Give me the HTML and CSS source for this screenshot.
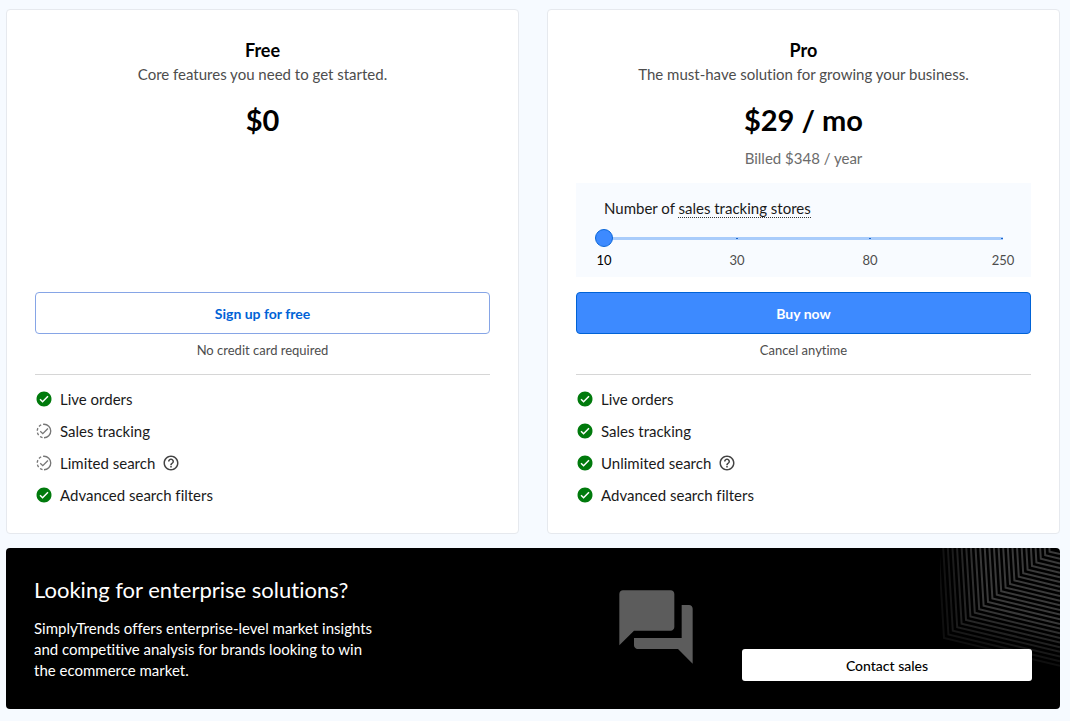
FILE: index.html
```html
<!DOCTYPE html>
<html lang="en">
  <head>
    <meta charset="UTF-8" />
    <meta name="viewport" content="width=device-width, initial-scale=1.0" />
    <title>SimplyTrends Pricing</title>
    <link rel="stylesheet" href="styles.css">
  </head>
  <body>
    <svg class="sprite" aria-hidden="true">
      <symbol id="check" viewBox="0 0 24 24">
        <path d="M12 2C6.48 2 2 6.48 2 12s4.48 10 10 10 10-4.48 10-10S17.52 2 12 2z" fill="#007a0c" />
        <path d="M6.7 12.3l3.4 3.4 7.2-7.3" fill="none" stroke="#fff" stroke-width="2" />
      </symbol>
      <symbol id="partial" viewBox="0 0 24 24">
        <path d="M12 3a9 9 0 0 1 0 18" fill="none" stroke="#777" stroke-width="1.8" />
        <path d="M12 21a9 9 0 0 1 0-18" fill="none" stroke="#777" stroke-width="1.8" stroke-dasharray="3.6 2.6" stroke-dashoffset="-2" />
        <path d="M7 12.3l3.4 3.2 6.8-6.8" fill="none" stroke="#777" stroke-width="1.8" />
      </symbol>
      <symbol id="help" viewBox="0 0 24 24">
        <path d="M11 18h2v-2h-2v2zm1-16C6.48 2 2 6.48 2 12s4.48 10 10 10 10-4.48 10-10S17.52 2 12 2zm0 18c-4.41 0-8-3.59-8-8s3.59-8 8-8 8 3.59 8 8-3.59 8-8 8zm0-14c-2.21 0-4 1.79-4 4h2c0-1.1.9-2 2-2s2 .9 2 2c0 2-3 1.75-3 5h2c0-2.25 3-2.5 3-5 0-2.21-1.79-4-4-4z" fill="#444" />
      </symbol>
    </svg>

    <main class="pricing">
      <div class="plans">
        <section class="plan">
          <div class="plan-top">
            <h2>Free</h2>
            <p class="tagline">Core features you need to get started.</p>
            <p class="price">$0</p>
          </div>
          <button class="btn btn-outline" type="button">Sign up for free</button>
          <p class="note">No credit card required</p>
          <ul class="features">
            <li><svg class="icon"><use href="#check" /></svg>Live orders</li>
            <li><svg class="icon"><use href="#partial" /></svg>Sales tracking</li>
            <li><svg class="icon"><use href="#partial" /></svg>Limited search<svg class="icon help"><use href="#help" /></svg></li>
            <li><svg class="icon"><use href="#check" /></svg>Advanced search filters</li>
          </ul>
        </section>

        <section class="plan">
          <div class="plan-top">
            <h2>Pro</h2>
            <p class="tagline">The must-have solution for growing your business.</p>
            <p class="price">$29 / mo</p>
            <p class="billed">Billed $348 / year</p>
            <div class="stores">
              <label for="stores">Number of <span class="hint">sales tracking stores</span></label>
              <input type="range" id="stores" min="0" max="3" step="1" value="0" />
              <div class="marks">
                <span class="active">10</span>
                <span>30</span>
                <span>80</span>
                <span>250</span>
              </div>
            </div>
          </div>
          <button class="btn btn-primary" type="button">Buy now</button>
          <p class="note">Cancel anytime</p>
          <ul class="features">
            <li><svg class="icon"><use href="#check" /></svg>Live orders</li>
            <li><svg class="icon"><use href="#check" /></svg>Sales tracking</li>
            <li><svg class="icon"><use href="#check" /></svg>Unlimited search<svg class="icon help"><use href="#help" /></svg></li>
            <li><svg class="icon"><use href="#check" /></svg>Advanced search filters</li>
          </ul>
        </section>
      </div>

      <section class="enterprise">
        <svg class="lines" id="lines" viewBox="0 0 120 120" aria-hidden="true"></svg>
        <div class="pitch">
          <h2>Looking for enterprise solutions?</h2>
          <p>SimplyTrends offers enterprise-level market insights and competitive analysis for brands looking to win the ecommerce market.</p>
        </div>
        <svg class="chat" viewBox="0 0 24 24" aria-hidden="true">
          <path d="M21 6h-2v9H6v2c0 .55.45 1 1 1h11l4 4V7c0-.55-.45-1-1-1zm-4 6V3c0-.55-.45-1-1-1H3c-.55 0-1 .45-1 1v14l4-4h10c.55 0 1-.45 1-1z" fill="#5c5c5c" />
        </svg>
        <button class="contact" type="button">Contact sales</button>
      </section>
    </main>

    <script>
      // corner lines in the enterprise banner, fading out to the left
      const lines = document.getElementById("lines");
      const count = 25;

      for (let i = 0; i < count; i++) {
        const x = 4 + i * 4.4;
        const y = 90 - i * 3.6;
        const line = document.createElementNS("http://www.w3.org/2000/svg", "polyline");
        line.setAttribute("points", `${x - y * 0.06},0 ${x},${y} 120,${y + (120 - x) * 0.24}`);
        line.setAttribute("opacity", Math.min(1, 0.25 + i * 0.08));
        lines.appendChild(line);
      }

      const stores = document.getElementById("stores");
      const marks = document.querySelectorAll(".marks span");

      stores.addEventListener("input", () => {
        marks.forEach((mark, i) => {
          mark.classList.toggle("active", i === Number(stores.value));
        });
      });
    </script>
  </body>
</html>
```
FILE: styles.css
```css
* {
  box-sizing: border-box;
}

body {
  margin: 0;
  background-color: #f6faff;
  color: #1a1a1a;
  font-family: Lato, "Open Sans", sans-serif;
  font-size: 15px;
  font-variant-ligatures: none;
  line-height: 24px;
}

h2,
p,
ul {
  margin: 0;
  padding: 0;
}

button {
  font-family: inherit;
  cursor: pointer;
}

.sprite {
  display: none;
}

.pricing {
  padding: 9px 10px 12px 6px;
}

.plans {
  display: grid;
  grid-template-columns: 1fr 1fr;
  gap: 28px;
}

.plan {
  display: flex;
  flex-direction: column;
  padding: 28px 28px 22px;
  background-color: #fff;
  border: 1px solid #e6e9ee;
  border-radius: 4px;
}

.plan-top {
  flex: 1;
  text-align: center;
}

.plan h2 {
  color: #000;
  font-size: 18px;
  font-weight: 700;
}

.tagline {
  color: #4d4d4d;
}

.price {
  margin-top: 14px;
  color: #000;
  font-size: 29px;
  font-weight: 700;
  line-height: 40px;
}

.billed {
  margin-top: 6px;
  color: #6b6b6b;
}

.stores {
  margin: 13px 0 15px;
  padding: 13px 28px 5px;
  background-color: #f8fbff;
  text-align: left;
}

.stores label {
  display: block;
}

.hint {
  border-bottom: 1px dotted #333;
}

.stores input {
  display: block;
  width: calc(100% + 18px);
  height: 18px;
  margin: 9px -9px 1px;
  background: none;
  appearance: none;
  cursor: pointer;
}

/* track is inset by half a thumb so its ends meet the first and last mark */
.stores input::-webkit-slider-runnable-track {
  height: 3px;
  background:
    linear-gradient(to right, #1a66cc 2px, transparent 2px calc(33.3% - 1px), #1a66cc calc(33.3% - 1px) calc(33.3% + 1px), transparent calc(33.3% + 1px) calc(66.6% - 1px), #1a66cc calc(66.6% - 1px) calc(66.6% + 1px), transparent calc(66.6% + 1px) calc(100% - 2px), #1a66cc calc(100% - 2px)) center / calc(100% - 18px) 1px no-repeat,
    linear-gradient(#a9ccfb, #a9ccfb) center / calc(100% - 18px) 3px no-repeat;
}

.stores input::-webkit-slider-thumb {
  width: 18px;
  height: 18px;
  margin-top: -8px;
  background-color: #3d8aff;
  border: 1px solid #0a66d8;
  border-radius: 50%;
  appearance: none;
}

.marks {
  display: flex;
  justify-content: space-between;
  margin: 0 -14px;
  color: #4d4d4d;
  font-size: 13px;
}

.marks span {
  width: 28px;
  text-align: center;
}

.marks .active {
  color: #000;
}

.btn {
  height: 42px;
  border-radius: 4px;
  font-size: 14px;
  font-weight: 700;
}

.btn-outline {
  background-color: #fff;
  border: 1px solid #86a5e6;
  color: #0062d6;
}

.btn-primary {
  background-color: #3d8aff;
  border: 1px solid #0062d6;
  color: #fff;
}

.note {
  padding: 4px 0 12px;
  border-bottom: 1px solid #d6d6d6;
  color: #4d4d4d;
  font-size: 13px;
  text-align: center;
}

.features {
  padding-top: 8px;
  list-style: none;
}

.features li {
  display: flex;
  align-items: center;
  height: 32px;
}

.icon {
  width: 18px;
  height: 18px;
  margin-right: 7px;
}

.icon.help {
  margin: 0 0 0 7px;
}

.enterprise {
  position: relative;
  display: grid;
  grid-template-columns: 1fr 88px 290px;
  align-items: center;
  gap: 42px;
  margin-top: 14px;
  padding: 28px;
  background-color: #000;
  border-radius: 4px;
  color: #fff;
  overflow: hidden;
}

.pitch h2 {
  font-size: 22px;
  font-weight: 400;
  line-height: 28px;
}

.pitch p {
  max-width: 350px;
  margin-top: 14px;
  line-height: 21px;
}

.chat {
  width: 88px;
  height: 88px;
  margin-bottom: 4px;
}

/* decoration behind the button */
.lines {
  position: absolute;
  top: 0;
  right: 0;
  width: 120px;
  height: 120px;
}

.lines polyline {
  fill: none;
  stroke: #3a3a3a;
  stroke-width: 2;
}

.contact {
  position: relative;
  align-self: end;
  height: 32px;
  background-color: #fff;
  border: none;
  border-radius: 3px;
  color: #000;
  font-size: 14px;
  font-weight: 500;
}
```
